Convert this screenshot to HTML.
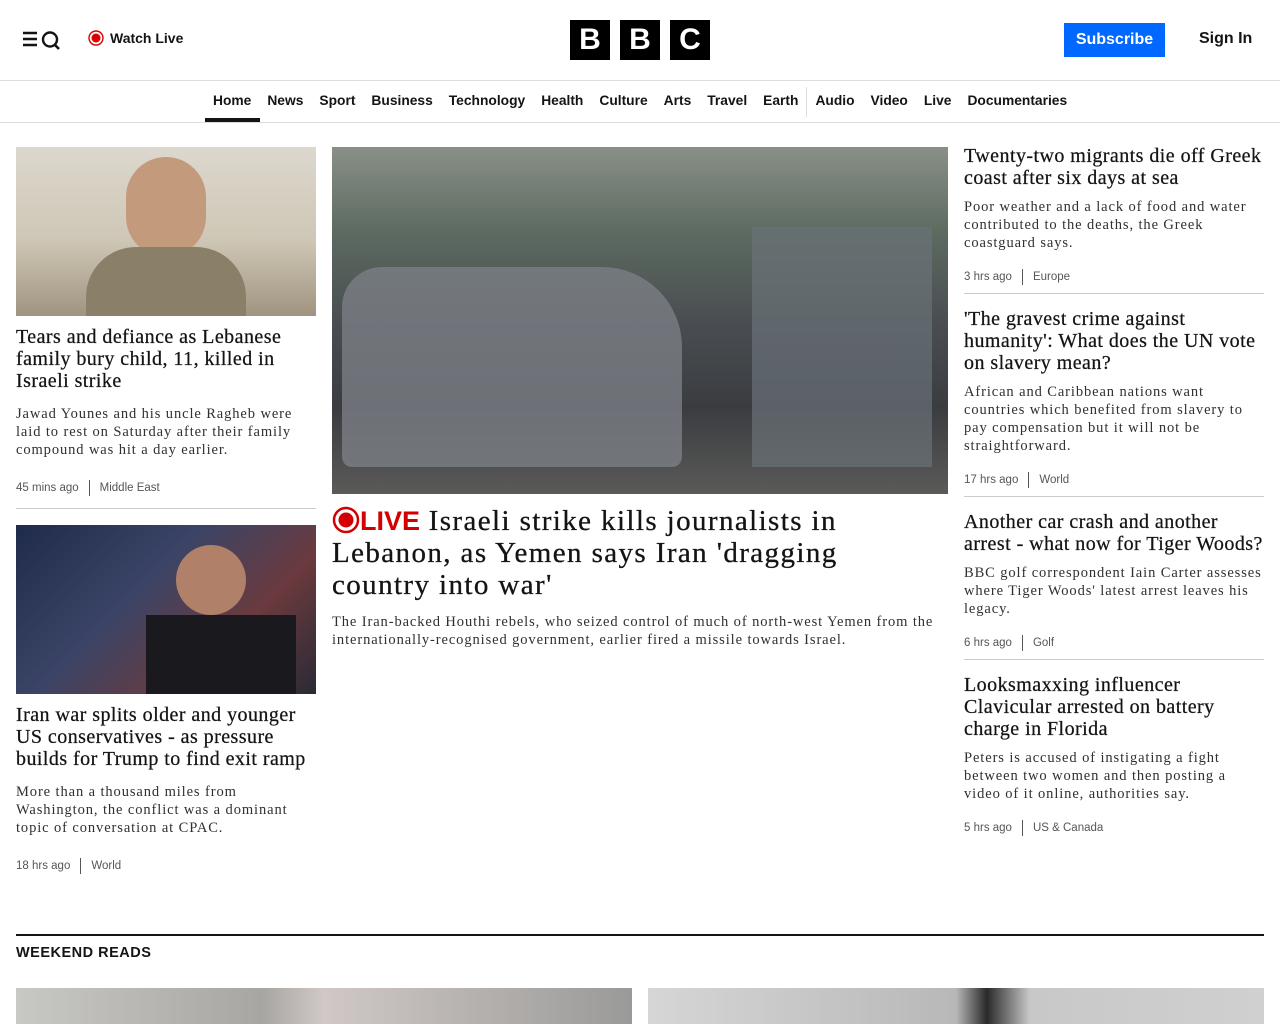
<!DOCTYPE html>
<html><head><meta charset="utf-8"><style>
*{margin:0;padding:0;box-sizing:border-box}
body{width:1280px;height:1024px;overflow:hidden;background:#fff;font-family:"Liberation Sans",sans-serif;color:#141414;position:relative}
.a{position:absolute}
.h{font-family:"Liberation Serif",serif;font-size:20px;line-height:22px;color:#141414;letter-spacing:0.45px;white-space:nowrap;-webkit-text-stroke:0.25px #141414}
.p{font-family:"Liberation Serif",serif;font-size:14.5px;line-height:18px;color:#303030;letter-spacing:0.9px;white-space:nowrap}
.m{font-size:11.5px;color:#545658;display:flex;align-items:center}
.m span.s{display:inline-block;width:1px;height:16px;background:#545658;margin:0 10px}
.hr{height:1px;background:#ccc}
nav a{font-size:13.8px;font-weight:bold;color:#141414;margin:0 8px;text-decoration:none}
.bb{display:inline-block;width:40px;height:40px;background:#000;color:#fff;font-weight:bold;font-size:30px;line-height:40px;text-align:center;margin-right:10px}
</style></head><body>
<div class="a" style="left:22px;top:30px">
<svg width="40" height="20" viewBox="0 0 40 20"><path d="M1 3h14M1 9h14M1 15h14" stroke="#141414" stroke-width="2.4"/><circle cx="28" cy="9.5" r="7" fill="none" stroke="#141414" stroke-width="2.4"/><path d="M32 14l5 5" stroke="#141414" stroke-width="2.6"/></svg></div>
<div class="a" style="left:88px;top:30px;display:flex;align-items:center">
<svg width="16" height="16"><circle cx="8" cy="8" r="7" fill="none" stroke="#d00" stroke-width="1.4"/><circle cx="8" cy="8" r="4.5" fill="#d00"/></svg>
<span style="font-size:14px;font-weight:bold;margin-left:6px">Watch Live</span></div>
<div class="a" style="left:570px;top:20px;display:flex"><span class="bb">B</span><span class="bb">B</span><span class="bb" style="margin:0">C</span></div>
<div class="a" style="left:1064px;top:23px;width:101px;height:34px;background:#0068ff;color:#fff;font-weight:bold;font-size:16px;line-height:34px;text-align:center">Subscribe</div>
<div class="a" style="left:1199px;top:30px;font-weight:bold;font-size:16px">Sign In</div>
<div class="a hr" style="left:0;top:80px;width:1280px;background:#ddd"></div>
<nav class="a" style="left:205px;top:93px;display:flex;white-space:nowrap">
<a style="margin-left:8px">Home</a><a>News</a><a>Sport</a><a>Business</a><a>Technology</a><a>Health</a><a>Culture</a><a>Arts</a><a>Travel</a><a>Earth</a><span style="width:1px;height:30px;background:#ddd;margin-top:-6px"></span><a>Audio</a><a>Video</a><a>Live</a><a>Documentaries</a></nav>
<div class="a" style="left:205px;top:118px;width:55px;height:4px;background:#141414"></div>
<div class="a hr" style="left:0;top:122px;width:1280px;background:#ddd"></div>

<div class="a" style="left:16px;top:147px;width:300px;height:169px;background:linear-gradient(180deg,#dcd8ce 0%,#cfc7b6 55%,#a09480 100%)">
<div class="a" style="left:110px;top:10px;width:80px;height:100px;border-radius:40px;background:#c49a7d"></div>
<div class="a" style="left:70px;top:100px;width:160px;height:69px;border-radius:50px 50px 0 0;background:#8a7f68"></div></div>
<div class="a h" style="left:16px;top:326px">Tears and defiance as Lebanese<br>family bury child, 11, killed in<br>Israeli strike</div>
<div class="a p" style="left:16px;top:405px">Jawad Younes and his uncle Ragheb were<br>laid to rest on Saturday after their family<br>compound was hit a day earlier.</div>
<div class="a m" style="left:16px;top:480px">45 mins ago<span class="s"></span>Middle East</div>
<div class="a hr" style="left:16px;top:508px;width:300px"></div>
<div class="a" style="left:16px;top:525px;width:300px;height:169px;background:linear-gradient(135deg,#1f2b4a 0%,#3b4466 40%,#6a3a3e 70%,#2a2a35 100%)">
<div class="a" style="left:160px;top:20px;width:70px;height:70px;border-radius:35px;background:#b08068"></div>
<div class="a" style="left:130px;top:90px;width:150px;height:79px;background:#1a1a1e"></div></div>
<div class="a h" style="left:16px;top:704px">Iran war splits older and younger<br>US conservatives - as pressure<br>builds for Trump to find exit ramp</div>
<div class="a p" style="left:16px;top:783px">More than a thousand miles from<br>Washington, the conflict was a dominant<br>topic of conversation at CPAC.</div>
<div class="a m" style="left:16px;top:858px">18 hrs ago<span class="s"></span>World</div>

<div class="a" style="left:332px;top:147px;width:616px;height:347px;background:linear-gradient(180deg,#8a9088 0%,#5c6a60 25%,#4a4e52 50%,#3a3c40 75%,#5a5a58 100%)">
<div class="a" style="left:10px;top:120px;width:340px;height:200px;border-radius:40px 80px 10px 10px;background:#7a7e84;opacity:.8"></div>
<div class="a" style="left:420px;top:80px;width:180px;height:240px;background:#6a7278;opacity:.7"></div></div>
<div class="a" style="left:332px;top:505px;white-space:nowrap;font-family:'Liberation Serif',serif;font-size:29px;line-height:32px;color:#141414;letter-spacing:1.4px;-webkit-text-stroke:0.3px #141414">
<span style="color:#d20000;font-family:'Liberation Sans',sans-serif;font-weight:bold;font-size:27px;letter-spacing:0;-webkit-text-stroke:0"><svg width="28" height="28" viewBox="0 0 28 28" style="vertical-align:-4px"><circle cx="14" cy="14" r="12" fill="none" stroke="#d20000" stroke-width="2.5"/><circle cx="14" cy="14" r="7.5" fill="#d20000"/></svg>LIVE</span> Israeli strike kills journalists in<br>Lebanon, as Yemen says Iran 'dragging<br>country into war'</div>
<div class="a p" style="left:332px;top:613px">The Iran-backed Houthi rebels, who seized control of much of north-west Yemen from the<br>internationally-recognised government, earlier fired a missile towards Israel.</div>

<div class="a h" style="left:964px;top:145px">Twenty-two migrants die off Greek<br>coast after six days at sea</div>
<div class="a p" style="left:964px;top:198px">Poor weather and a lack of food and water<br>contributed to the deaths, the Greek<br>coastguard says.</div>
<div class="a m" style="left:964px;top:269px">3 hrs ago<span class="s"></span>Europe</div>
<div class="a hr" style="left:964px;top:293px;width:300px"></div>
<div class="a h" style="left:964px;top:308px">'The gravest crime against<br>humanity': What does the UN vote<br>on slavery mean?</div>
<div class="a p" style="left:964px;top:383px">African and Caribbean nations want<br>countries which benefited from slavery to<br>pay compensation but it will not be<br>straightforward.</div>
<div class="a m" style="left:964px;top:472px">17 hrs ago<span class="s"></span>World</div>
<div class="a hr" style="left:964px;top:496px;width:300px"></div>
<div class="a h" style="left:964px;top:511px">Another car crash and another<br>arrest - what now for Tiger Woods?</div>
<div class="a p" style="left:964px;top:564px">BBC golf correspondent Iain Carter assesses<br>where Tiger Woods' latest arrest leaves his<br>legacy.</div>
<div class="a m" style="left:964px;top:635px">6 hrs ago<span class="s"></span>Golf</div>
<div class="a hr" style="left:964px;top:659px;width:300px"></div>
<div class="a h" style="left:964px;top:674px">Looksmaxxing influencer<br>Clavicular arrested on battery<br>charge in Florida</div>
<div class="a p" style="left:964px;top:749px">Peters is accused of instigating a fight<br>between two women and then posting a<br>video of it online, authorities say.</div>
<div class="a m" style="left:964px;top:820px">5 hrs ago<span class="s"></span>US &amp; Canada</div>

<div class="a" style="left:16px;top:934px;width:1248px;height:2px;background:#141414"></div>
<div class="a" style="left:16px;top:945px;font-weight:bold;font-size:14.5px;letter-spacing:0.5px">WEEKEND READS</div>
<div class="a" style="left:16px;top:988px;width:616px;height:36px;background:linear-gradient(90deg,#c8c8c4,#a8a6a2 40%,#d0c8c6 50%,#9a9a98)"></div>
<div class="a" style="left:648px;top:988px;width:616px;height:36px;background:linear-gradient(90deg,#d6d6d6,#b8b8b8 50%,#2a2a2a 55%,#c8c8c8 62%,#d0d0d0)"></div>
</body></html>
